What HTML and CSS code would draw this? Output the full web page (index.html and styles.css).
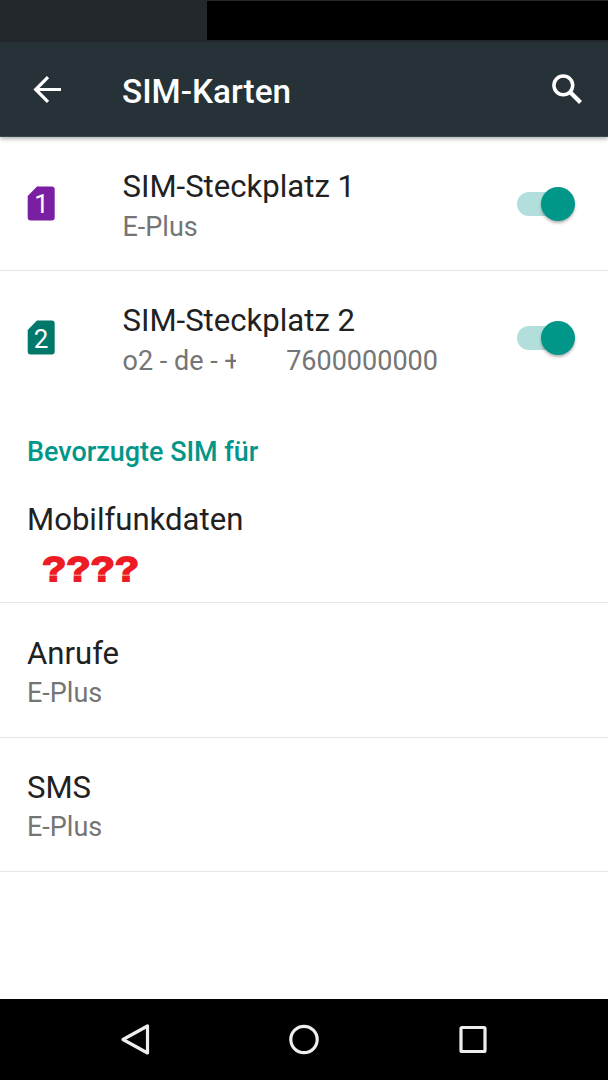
FILE: index.html
```html
<!DOCTYPE html>
<html lang="de">
<head>
<meta charset="utf-8">
<title>SIM-Karten</title>
<link rel="stylesheet" href="styles.css">
</head>
<body>
<div class="screen">
  <div class="status-bar"><div class="status-block"></div></div>
  <header class="app-bar">
    <svg class="back" width="30" height="30" viewBox="0 0 30 30"><path d="M28 15.500H2.500M15 3.200 2.700 15.500 15 27.800" fill="none" stroke="#fff" stroke-width="3.200"/></svg>
    <h1 class="title">SIM-Karten</h1>
    <svg class="search" width="32" height="32" viewBox="0 0 32 32"><circle cx="12.300" cy="12.300" r="9.400" fill="none" stroke="#fff" stroke-width="3.500"/><path d="M19.500 19.500 29.500 29.500" stroke="#fff" stroke-width="4.200"/></svg>
  </header>
  <main class="content">
    <div class="row slot first">
      <svg class="sim" width="28" height="35" viewBox="0 0 28 35"><path d="M10 .500H24.700Q27.700 .500 27.700 3.500V31.500Q27.700 34.500 24.700 34.500H3.700Q.700 34.500 .700 31.500V10Z" fill="#7b1fa2"/><text class="sim-number" x="14.500" y="27">1</text></svg>
      <div class="texts"><div class="name">SIM-Steckplatz 1</div><div class="detail">E-Plus</div></div>
      <div class="switch"><div class="thumb"></div></div>
    </div>
    <div class="row slot second">
      <svg class="sim" width="28" height="35" viewBox="0 0 28 35"><path d="M10 .500H24.700Q27.700 .500 27.700 3.500V31.500Q27.700 34.500 24.700 34.500H3.700Q.700 34.500 .700 31.500V10Z" fill="#00796b"/><text class="sim-number" x="14" y="27.500">2</text></svg>
      <div class="texts"><div class="name">SIM-Steckplatz 2</div><div class="detail number"><span>o2 - de - +</span><span class="mask"></span><span>7600000000</span></div></div>
      <div class="switch"><div class="thumb"></div></div>
    </div>
    <h2 class="section">Bevorzugte SIM für</h2>
    <div class="row data"><div class="name">Mobilfunkdaten</div><div class="unknown">????</div></div>
    <div class="row calls"><div class="name">Anrufe</div><div class="detail">E-Plus</div></div>
    <div class="row sms"><div class="name">SMS</div><div class="detail">E-Plus</div></div>
  </main>
  <nav class="nav-bar">
    <svg width="34" height="34" viewBox="0 0 34 34"><path d="M29.500 3V30L5 16.500Z" fill="none" stroke="#eee" stroke-width="3.200" stroke-linejoin="round"/></svg>
    <svg width="34" height="34" viewBox="0 0 34 34"><circle cx="17" cy="16.500" r="13.200" fill="none" stroke="#eee" stroke-width="3.200"/></svg>
    <svg width="34" height="34" viewBox="0 0 34 34"><rect x="5" y="4.500" width="24" height="24" rx="1" fill="none" stroke="#eee" stroke-width="3.200"/></svg>
  </nav>
</div>
</body>
</html>
```
FILE: styles.css
```css
* { box-sizing: border-box; }
body { margin: 0; font-family: Roboto, sans-serif; background: #fff; }
.screen { width: 608px; height: 1080px; display: flex; flex-direction: column; overflow: hidden; }
.status-bar { height: 42px; background: #22282b; padding-top: 1px; display: flex; justify-content: flex-end; }
.status-block { width: 401px; height: 39px; background: #000; }
.app-bar { height: 95px; background: #263238; display: flex; align-items: flex-start; padding: 0 25px 0 33px; border-bottom: 1px solid #3b464c; box-shadow: 0 2px 4px rgba(0,0,0,.3); position: relative; }
.back { margin-top: 32px; }
.title { margin: 29px auto 0 59px; font-size: 33.300px; line-height: 42px; font-weight: 500; color: #fff; }
.search { margin-top: 31px; }
.content { flex: 1; }
.row { padding: 30px 27px 0; border-bottom: 1px solid #e6e6e6; color: #212121; }
.slot { display: flex; padding-right: 33px; }
.first { height: 134px; padding-top: 29px; }
.second { height: 134px; padding-top: 29px; border: 0; }
.sim { margin: 20px 67.500px 0 0; flex: none; }
.texts { flex: 1; }
.sim-number { font-size: 26px; fill: #fff; text-anchor: middle; }
.name { font-size: 31.100px; line-height: 42px; white-space: nowrap; }
.detail { font-size: 27px; line-height: 37px; color: #757575; white-space: nowrap; }
.slot .detail { line-height: 39px; }
.number { display: flex; }
.mask { width: 50.500px; margin-left: -4px; background: #fff; z-index: 1; }
.switch { width: 58px; height: 36px; margin-top: 19.500px; display: flex; align-items: center; justify-content: flex-end; }
.switch::before { content: ""; width: 40px; height: 24px; margin-right: -16px; border-radius: 12px 0 0 12px; background: #b2dfdb; flex: none; }
.thumb { width: 34px; height: 34px; border-radius: 50%; background: #009688; box-shadow: 0 2px 3px rgba(0,0,0,.3); flex: none; }
.section { margin: 0; padding: 27px 27px 0; height: 64px; font-size: 26.950px; line-height: 40px; font-weight: 500; color: #009688; }
.data { height: 134px; }
.unknown { margin-left: 14.500px; font: bold 35px/56px "Liberation Sans", sans-serif; color: #ed1c24; -webkit-text-stroke: 1.800px #ed1c24; transform: scaleX(1.135); transform-origin: left; }
.calls { height: 135px; }
.sms { height: 134px; padding-top: 29px; }
.nav-bar { height: 81px; background: #000; display: flex; justify-content: center; align-items: center; gap: 135px; }
```
